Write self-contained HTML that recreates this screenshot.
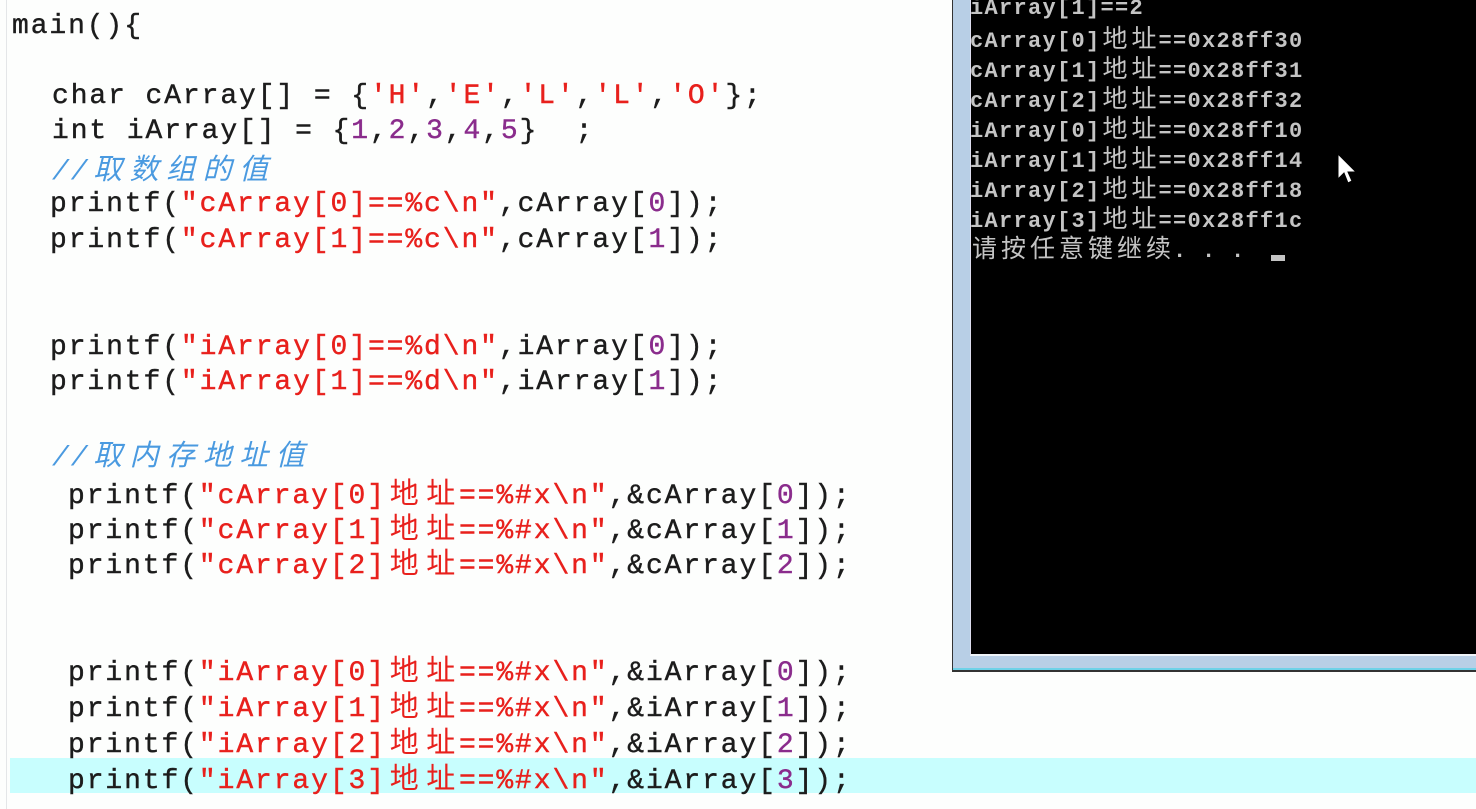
<!DOCTYPE html>
<html><head><meta charset="utf-8"><style>
html,body{margin:0;padding:0;}
body{width:1476px;height:809px;background:#fdfefd;position:relative;overflow:hidden;}
.gut{position:absolute;left:6px;top:0;width:1px;height:809px;background:#e4e6e8;}
.hl{position:absolute;left:10px;top:758px;width:1466px;height:35px;background:#c8fefe;}
.l{position:absolute;font-family:"Liberation Mono","Noto Sans CJK SC",monospace;font-size:28px;letter-spacing:1.9px;color:#1c1c1c;white-space:pre;line-height:36px;height:36px;-webkit-text-stroke:0.4px currentColor;}
.s{color:#e8201c;}
.n{color:#8a2c8c;}
.c{display:inline-block;width:36.5px;font-family:"Noto Sans CJK SC",sans-serif;font-size:29px;letter-spacing:0;text-align:center;-webkit-text-stroke:0;}
.cm{color:#4a9ae0;font-style:italic;-webkit-text-stroke:0;}
.con{position:absolute;left:952px;top:-10px;width:540px;height:680px;background:#b8cfe6;border-left:1px solid #333;border-bottom:2px solid #333;}
.con:before{content:"";position:absolute;left:0;right:0;bottom:0;height:2px;background:#6ed2e8;}
.blk{position:absolute;left:970px;top:0;width:506px;height:654px;background:#000;border-bottom:2px solid #eef3f8;border-left:1px solid #dde;}
.t{position:absolute;left:970px;font-family:"Liberation Mono","Noto Sans CJK SC",monospace;font-weight:bold;font-size:22px;letter-spacing:1.3px;color:#c4c4c4;white-space:pre;line-height:30px;}
.t .c{width:29px;font-size:25px;font-weight:normal;}
</style></head><body>
<div class="gut"></div>
<div class="hl"></div>
<div class="l" style="left:12px;top:9px">main(){</div>
<div class="l" style="left:52px;top:79px">char cArray[] = {<span class="s">'H'</span>,<span class="s">'E'</span>,<span class="s">'L'</span>,<span class="s">'L'</span>,<span class="s">'O'</span>};</div>
<div class="l" style="left:52px;top:114px">int iArray[] = {<span class="n">1</span>,<span class="n">2</span>,<span class="n">3</span>,<span class="n">4</span>,<span class="n">5</span>}  ;</div>
<div class="l cm" style="left:52px;top:149px">//<span class="c">取</span><span class="c">数</span><span class="c">组</span><span class="c">的</span><span class="c">值</span></div>
<div class="l" style="left:50px;top:187px">printf(<span class="s">"cArray[0]==%c\n"</span>,cArray[<span class="n">0</span>]);</div>
<div class="l" style="left:50px;top:223px">printf(<span class="s">"cArray[1]==%c\n"</span>,cArray[<span class="n">1</span>]);</div>
<div class="l" style="left:50px;top:330px">printf(<span class="s">"iArray[0]==%d\n"</span>,iArray[<span class="n">0</span>]);</div>
<div class="l" style="left:50px;top:365px">printf(<span class="s">"iArray[1]==%d\n"</span>,iArray[<span class="n">1</span>]);</div>
<div class="l cm" style="left:52px;top:435px">//<span class="c">取</span><span class="c">内</span><span class="c">存</span><span class="c">地</span><span class="c">址</span><span class="c">值</span></div>
<div class="l" style="left:68px;top:473px">printf(<span class="s">"cArray[0]<span class="c">地</span><span class="c">址</span>==%#x\n"</span>,&amp;cArray[<span class="n">0</span>]);</div>
<div class="l" style="left:68px;top:508px">printf(<span class="s">"cArray[1]<span class="c">地</span><span class="c">址</span>==%#x\n"</span>,&amp;cArray[<span class="n">1</span>]);</div>
<div class="l" style="left:68px;top:543px">printf(<span class="s">"cArray[2]<span class="c">地</span><span class="c">址</span>==%#x\n"</span>,&amp;cArray[<span class="n">2</span>]);</div>
<div class="l" style="left:68px;top:650px">printf(<span class="s">"iArray[0]<span class="c">地</span><span class="c">址</span>==%#x\n"</span>,&amp;iArray[<span class="n">0</span>]);</div>
<div class="l" style="left:68px;top:686px">printf(<span class="s">"iArray[1]<span class="c">地</span><span class="c">址</span>==%#x\n"</span>,&amp;iArray[<span class="n">1</span>]);</div>
<div class="l" style="left:68px;top:722px">printf(<span class="s">"iArray[2]<span class="c">地</span><span class="c">址</span>==%#x\n"</span>,&amp;iArray[<span class="n">2</span>]);</div>
<div class="l" style="left:68px;top:758px">printf(<span class="s">"iArray[3]<span class="c">地</span><span class="c">址</span>==%#x\n"</span>,&amp;iArray[<span class="n">3</span>]);</div>

<div class="con"></div>
<div class="blk"></div>
<div class="t" style="top:-6px">iArray[1]==2</div>
<div class="t" style="top:22px">cArray[0]<span class="c">地</span><span class="c">址</span>==0x28ff30</div>
<div class="t" style="top:52px">cArray[1]<span class="c">地</span><span class="c">址</span>==0x28ff31</div>
<div class="t" style="top:82px">cArray[2]<span class="c">地</span><span class="c">址</span>==0x28ff32</div>
<div class="t" style="top:112px">iArray[0]<span class="c">地</span><span class="c">址</span>==0x28ff10</div>
<div class="t" style="top:142px">iArray[1]<span class="c">地</span><span class="c">址</span>==0x28ff14</div>
<div class="t" style="top:172px">iArray[2]<span class="c">地</span><span class="c">址</span>==0x28ff18</div>
<div class="t" style="top:202px">iArray[3]<span class="c">地</span><span class="c">址</span>==0x28ff1c</div>
<div class="t" style="top:232px"><span class="c">请</span><span class="c">按</span><span class="c">任</span><span class="c">意</span><span class="c">键</span><span class="c">继</span><span class="c">续</span>. . . </div>
<div style="position:absolute;left:1271px;top:255px;width:14px;height:6px;background:#c4c4c4"></div>
<svg style="position:absolute;left:1336px;top:152px" width="24" height="36" viewBox="0 0 24 36"><path d="M2 2 L2 27 L8 21 L12 31 L16 29 L12 20 L20 20 Z" fill="#fff" stroke="#000" stroke-width="1"/></svg>
</body></html>
